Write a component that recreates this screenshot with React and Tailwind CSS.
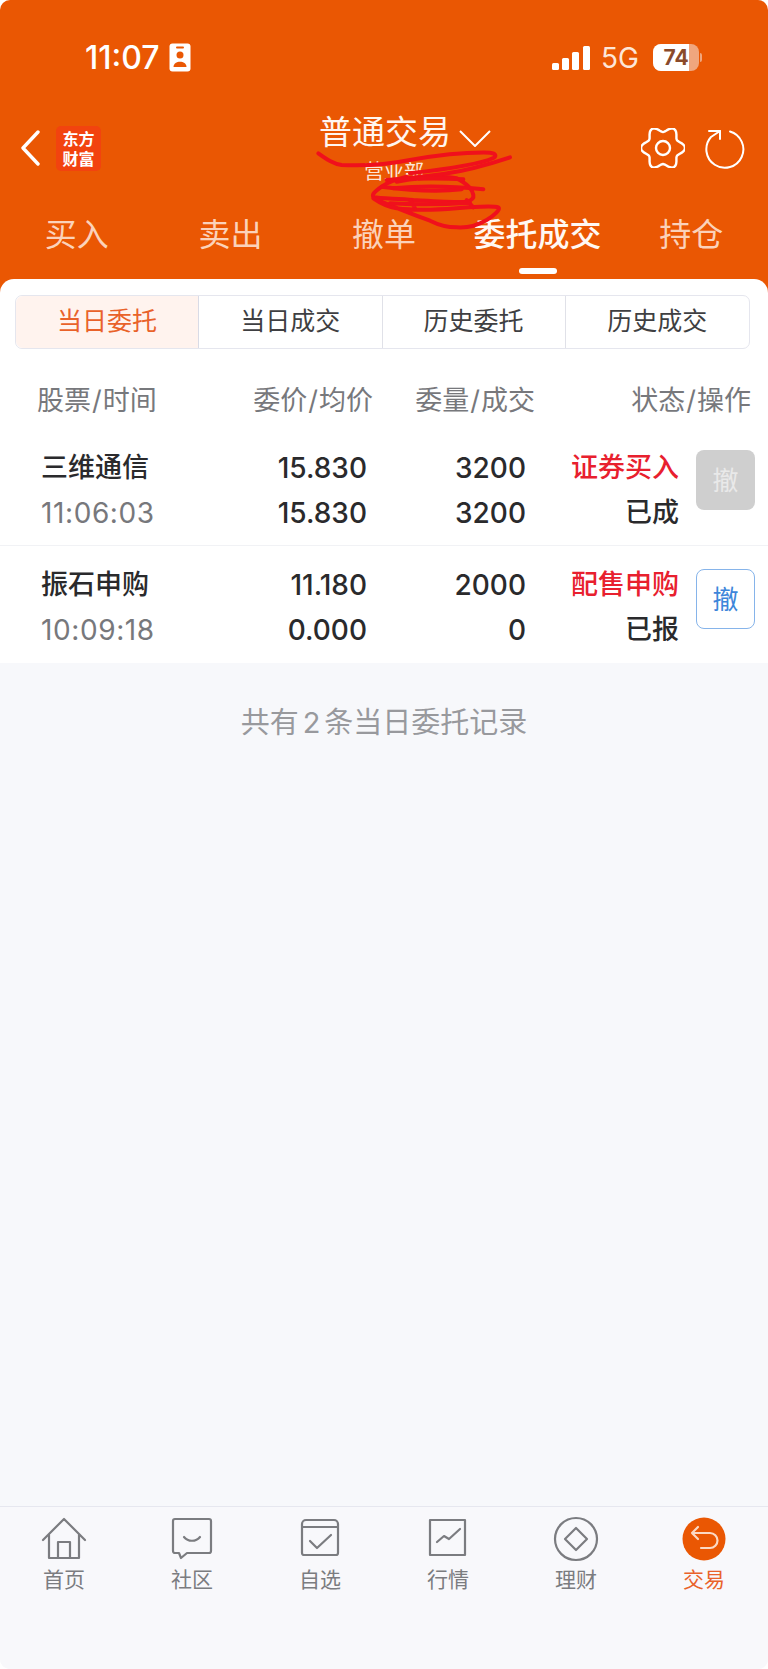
import React from "react";

const CJK = { fontFamily: '"Inter", "Noto Sans CJK SC", sans-serif' };

const tabs = ["买入", "卖出", "撤单", "委托成交", "持仓"];
const segments = ["当日委托", "当日成交", "历史委托", "历史成交"];
const orders = [
  { name: "三维通信", time: "11:06:03", price: "15.830", avg: "15.830", qty: "3200", deal: "3200", type: "证券买入", status: "已成", active: false },
  { name: "振石申购", time: "10:09:18", price: "11.180", avg: "0.000", qty: "2000", deal: "0", type: "配售申购", status: "已报", active: true },
];

// wavy outline of the settings cog
const gearPath = (() => {
  let d = "";
  for (let i = 0; i < 72; i++) {
    const a = (i * 5 * Math.PI) / 180;
    const r = 19 + 3 * Math.cos(6 * a);
    d += `${i === 0 ? "M" : "L"}${(22 + r * Math.cos(a)).toFixed(2)} ${(20 + r * Math.sin(a)).toFixed(2)}`;
  }
  return d + "Z";
})();

function NavIcon({ type }) {
  const common = { fill: "none", stroke: "#7b7c80", strokeWidth: 2.2, strokeLinejoin: "round", strokeLinecap: "round" };
  if (type === "home")
    return (
      <svg width="46" height="44" viewBox="0 0 46 44" {...common}>
        <path d="M2 23 23 2l21 21M8 18v23h30V18" />
        <path d="M17 41V25h12v16" />
      </svg>
    );
  if (type === "chat")
    return (
      <svg width="42" height="44" viewBox="0 0 42 44" {...common}>
        <path d="M4 2h34a2 2 0 0 1 2 2v30a2 2 0 0 1-2 2H16l-6 5-2-5H4a2 2 0 0 1-2-2V4a2 2 0 0 1 2-2Z" />
        <path d="M13 20c4 5 12 5 16 0" />
      </svg>
    );
  if (type === "check")
    return (
      <svg width="40" height="44" viewBox="0 0 40 44" {...common}>
        <path d="M6 3h28a4 4 0 0 1 4 4v29a2 2 0 0 1-2 2H4a2 2 0 0 1-2-2V7a4 4 0 0 1 4-4ZM2 10h36" />
        <path d="m10 24 7 7 14-13" />
      </svg>
    );
  if (type === "chart")
    return (
      <svg width="40" height="44" viewBox="0 0 40 44" {...common}>
        <path d="M2 3h35v35H2Z" />
        <path d="m9 25 7-6 5 3 11-10" />
      </svg>
    );
  if (type === "diamond")
    return (
      <svg width="46" height="46" viewBox="0 0 46 46" {...common}>
        <circle cx="23" cy="23" r="21" />
        <path d="M23 12 34 23 23 34 12 23Z" />
      </svg>
    );
  return (
    <svg width="44" height="44" viewBox="0 0 44 44">
      <circle cx="22" cy="22" r="21.5" fill="#ea5703" />
      <path d="M16 10 10 16l6 6M10 16h18a7.500 7.500 0 0 1 0 15H19" fill="none" stroke="#fbd9c4" strokeWidth="2.200" strokeLinecap="round" strokeLinejoin="round" />
    </svg>
  );
}

const navItems = [
  { label: "首页", icon: "home" },
  { label: "社区", icon: "chat" },
  { label: "自选", icon: "check" },
  { label: "行情", icon: "chart" },
  { label: "理财", icon: "diamond" },
  { label: "交易", icon: "undo", active: true },
];

function OrderRow({ order, last }) {
  return (
    <div className={`flex items-start pl-[41px] pr-[13px] h-[117px] pt-[24px] ${last ? "" : "border-b border-[#f1f2f5]"}`}>
      <div className="w-[150px] flex flex-col gap-[15px]">
        <span className="text-[27px] leading-[30px] font-medium text-[#2a2a2c]">{order.name}</span>
        <span className="text-[28px] leading-[30px] tracking-[0.6px] text-[#77787c]">{order.time}</span>
      </div>
      <div className="w-[176px] flex flex-col gap-[15px] items-end text-[28px] leading-[30px] font-medium text-[#2a2a2c]">
        <span>{order.price}</span>
        <span>{order.avg}</span>
      </div>
      <div className="w-[159px] flex flex-col gap-[15px] items-end text-[28px] leading-[30px] font-medium text-[#2a2a2c]">
        <span>{order.qty}</span>
        <span>{order.deal}</span>
      </div>
      <div className="w-[153px] flex flex-col gap-[15px] items-end text-[27px] leading-[30px] font-medium">
        <span className="text-[#e8202e]">{order.type}</span>
        <span className="text-[#2a2a2c]">{order.status}</span>
      </div>
      {order.active ? (
        <button className="-mt-[1px] ml-[17px] w-[59px] h-[60px] rounded-[8px] border border-[#86b4ea] bg-white text-[26px] text-[#3d86da]">撤</button>
      ) : (
        <button className="-mt-[3px] ml-[17px] w-[59px] h-[60px] rounded-[8px] bg-[#cfcfcf] text-[26px] text-[#e9e9e9]">撤</button>
      )}
    </div>
  );
}

export default function App() {
  return (
    <div className="w-[768px] h-[1669px] bg-white" style={CJK}>
      <div className="relative w-full h-full flex flex-col bg-[#f7f8fb] rounded-[10px] overflow-hidden">
        {/* orange header */}
        <div className="bg-[#ea5703] text-white h-[295px] shrink-0">
          <div className="flex items-center justify-between h-[114px] pt-[1px] pl-[85px] pr-[66px]">
            <div className="flex items-center gap-[9px]">
              <span className="text-[32px] leading-none font-medium">11:07</span>
              <svg width="22" height="29" viewBox="0 0 22 29">
                <rect width="21" height="28" x="0.500" y="0.500" rx="3" fill="#fff" />
                <rect x="7" y="3.500" width="8" height="2" rx="1" fill="#ea5703" />
                <circle cx="11" cy="12" r="3.500" fill="#ea5703" />
                <path d="M4.500 24c0-7 13-7 13 0Z" fill="#ea5703" />
              </svg>
            </div>
            <div className="flex items-center">
              <svg width="38" height="24" viewBox="0 0 38 24" fill="#fff">
                <rect x="0" y="17" width="7" height="7" rx="1.500" />
                <rect x="10" y="12" width="7" height="12" rx="1.500" />
                <rect x="20" y="6" width="7" height="18" rx="1.500" />
                <rect x="31" y="0" width="7" height="24" rx="1.500" />
              </svg>
              <span className="ml-[11px] text-[28px] leading-none text-[#fde6d8]">5G</span>
              <div className="relative ml-[14px] w-[46px] h-[27px] rounded-[8px] overflow-hidden bg-[#f0a67e]">
                <div className="w-[36px] h-full bg-white" />
                <span className="absolute inset-0 flex items-center justify-center text-[21px] font-bold text-[#8a4a2a]">74</span>
              </div>
              <div className="ml-[1px] w-[2px] h-[9px] rounded-r bg-[#f0a67e]" />
            </div>
          </div>
          <div className="relative flex items-center justify-between h-[68px] pl-[21px] pr-[23px]">
            <div className="flex items-center gap-[16px]">
              <svg width="19" height="36" viewBox="0 0 19 36" fill="none" stroke="#fff" strokeWidth="3.400" strokeLinecap="round" strokeLinejoin="round">
                <path d="M17 2 2 18l15 16" />
              </svg>
              <div className="w-[45px] h-[45px] rounded-[5px] bg-[#f2430f] flex flex-col items-center justify-center text-[16px] leading-[20px] font-bold" style={{ fontFamily: '"Noto Sans CJK SC", serif' }}>
                <span>东方</span>
                <span>财富</span>
              </div>
            </div>
            <div className="absolute left-[319px] top-[-2px] flex items-start">
              <div className="flex flex-col">
                <span className="text-[33px] leading-[40px] text-[#fff6f0]">普通交易</span>
                <span className="ml-[45px] mt-[8px] text-[20px] leading-[24px] text-[#fde6d8]">营业部</span>
              </div>
              <svg className="ml-[8px] mt-[18px]" width="32" height="17" viewBox="0 0 32 17" fill="none" stroke="#fff" strokeWidth="2">
                <path d="M1 1l15 15L31 1" />
              </svg>
            </div>
            <div className="flex items-center gap-[20px]">
              <svg width="44" height="40" viewBox="0 0 44 40" fill="none" stroke="#fff" strokeWidth="2.400" strokeLinejoin="round">
                <path d={gearPath} />
                <circle cx="22" cy="20" r="7" />
              </svg>
              <svg width="40" height="41" viewBox="0 0 40 41" fill="none" stroke="#fff" strokeWidth="2" strokeLinecap="round" strokeLinejoin="round">
                <path d="M25 3.500A18.500 18.500 0 1 1 6 9l9-6" />
                <path d="M4 3h11v8" />
              </svg>
            </div>
          </div>
          <div className="grid grid-cols-5 items-center h-[86px] pt-[22px] pb-[2px]">
            {tabs.map((t, i) => (
              <span key={t} className={`text-center text-[32px] leading-[40px] ${i === 3 ? "text-[#fff8f3] font-medium" : "text-[#fbd2ba]"}`}>{t}</span>
            ))}
          </div>
          <div className="ml-[519px] w-[38px] h-[6px] rounded-full bg-white" />
        </div>

        {/* scribble that hides the account name */}
        <svg className="absolute left-[310px] top-[140px] pointer-events-none" width="210" height="95" viewBox="0 0 630 285" fill="none" stroke="#f0101c" strokeWidth="12" strokeLinecap="round" strokeLinejoin="round">
          <path d="M25 40C50 58 70 72 95 75c60 3 140-2 205-15 80-14 160-24 240-22 18 2 20 10 10 16-30 14-110 30-250 46" />
          <path d="M600 52C540 72 470 92 400 102c-50 8-110 12-160 18" />
          <path d="M290 110c-30 8-60 18-75 30-20 14-30 24-25 30 20 8 70 4 120 10 60 4 130 8 160 5 16-4 22-10 20-20-4-18-14-30-50-50-30-6-90-6-180 10" />
          <path d="M250 145c60-6 160-8 270 3" />
          <path d="M190 175c20 14 46 26 70 30 60 8 130 4 180 0 40-4 110-8 125-3 8 6-14 26-35 38-30 18-60 24-90 22-30 0-60-10-80-20-50-18-110-42-170-67" />
          <path d="M300 180l15 25M470 180l20 22M215 140c60 8 150 18 240 8M230 120c70-4 160-6 230-2M240 190c70 4 150 4 240-2" />
        </svg>

        {/* white list card */}
        <div className="bg-white rounded-t-[14px] -mt-[16px] relative shrink-0">
          <div className="pt-[16px] pl-[15px] pr-[18px]">
            <div className="grid grid-cols-4 h-[54px] rounded-[7px] border border-[#e5e6ee]">
              {segments.map((s, i) => (
                <div
                  key={s}
                  className={`flex items-center justify-center text-[25px] ${i === 0 ? "bg-[#fff3ee] text-[#e9622a] rounded-l-[7px] border-r border-[#d9dbe6]" : "text-[#3f3f42]"} ${i === 1 || i === 2 ? "border-r border-[#e0e1e8]" : ""}`}
                >
                  {s}
                </div>
              ))}
            </div>
          </div>
          <div className="flex items-start h-[80px] pt-[33px] pl-[37px] pr-[17px] text-[27px] leading-[38px] text-[#77787c]">
            <span className="w-[122px] whitespace-nowrap">股票<span className="mx-[1px]">/</span>时间</span>
            <span className="w-[214px] text-right whitespace-nowrap">委价<span className="mx-[1px]">/</span>均价</span>
            <span className="w-[162px] text-right whitespace-nowrap">委量<span className="mx-[1px]">/</span>成交</span>
            <span className="flex-1 text-right whitespace-nowrap">状态<span className="mx-[1px]">/</span>操作</span>
          </div>
          {orders.map((o, i) => (
            <OrderRow key={o.name} order={o} last={i === orders.length - 1} />
          ))}
        </div>

        {/* empty area with record count */}
        <div className="flex-1 flex justify-center pt-[40px] text-[29px] leading-[40px] text-[#98999d]">
          <span>共有<span className="mx-[4px]">2</span>条当日委托记录</span>
        </div>

        {/* bottom nav */}
        <div className="shrink-0 h-[163px] border-t border-[#e6e7ef] grid grid-cols-6 bg-[#f8f8fb] pt-[9px]">
          {navItems.map((n) => (
            <div key={n.label} className="flex flex-col items-center">
              <div className="h-[46px] flex items-center justify-center">
                <NavIcon type={n.icon} />
              </div>
              <span className={`mt-[4px] text-[21px] leading-[28px] ${n.active ? "text-[#e9622a]" : "text-[#7b7c80]"}`}>{n.label}</span>
            </div>
          ))}
        </div>
      </div>
    </div>
  );
}
